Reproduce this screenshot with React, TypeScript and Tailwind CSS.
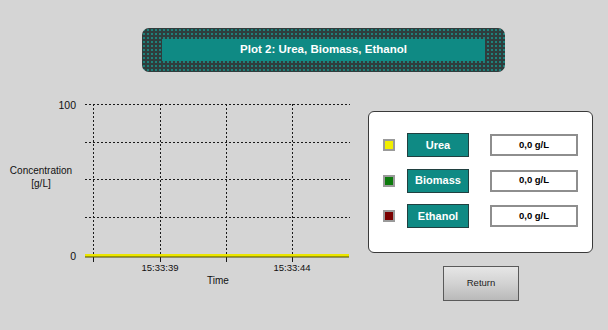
const rows = [
  { name: "Urea", swatch: "bg-[#f2ef00]" },
  { name: "Biomass", swatch: "bg-[#0c7a0c]" },
  { name: "Ethanol", swatch: "bg-[#7a0000]" },
];

const hLines = [14, 52, 89, 127];
const vLines = [93, 160, 226, 292];

function Chart() {
  return (
    <svg width={360} height={200} className="block shrink-0" fontFamily="'Liberation Sans', Arial, sans-serif">
      {hLines.map((y) => (
        <line key={y} x1={85} x2={350} y1={y + 0.5} y2={y + 0.5} stroke="#1a1a1a" strokeWidth={1} strokeDasharray="2 2" />
      ))}
      {vLines.map((x) => (
        <g key={x}>
          <line x1={x + 0.5} x2={x + 0.5} y1={14} y2={165} stroke="#1a1a1a" strokeWidth={1} strokeDasharray="2 2" />
          <line x1={x + 0.5} x2={x + 0.5} y1={165} y2={172} stroke="#1a1a1a" strokeWidth={1} />
        </g>
      ))}
      <rect x={85} y={164} width={264} height={3.5} fill="#4a4a00" />
      <rect x={85} y={164} width={264} height={2.5} fill="#ece600" />

      <text x={76} y={19} textAnchor="end" fontSize={10.5} fill="#111">100</text>
      <text x={76} y={170} textAnchor="end" fontSize={10.5} fill="#111">0</text>
      <text x={160} y={181} textAnchor="middle" fontSize={9.5} fill="#111">15:33:39</text>
      <text x={292} y={181} textAnchor="middle" fontSize={9.5} fill="#111">15:33:44</text>
      <text x={218} y={194} textAnchor="middle" fontSize={10} fill="#111">Time</text>
      <text x={41} y={84} textAnchor="middle" fontSize={10} fill="#111">Concentration</text>
      <text x={41} y={97} textAnchor="middle" fontSize={10} fill="#111">[g/L]</text>
    </svg>
  );
}

export default function App() {
  return (
    <div className="flex h-[330px] w-[608px] flex-col overflow-hidden bg-[#d5d5d5] font-['Liberation_Sans',Arial,sans-serif]">
      {/* title banner */}
      <div className="ml-[142px] mt-[28px] h-[44px] w-[363px] rounded-[7px] bg-[#2f3d3d] bg-[radial-gradient(circle,#1f807a_0.9px,transparent_1.3px)] bg-size-[4px_4px] px-[20px] py-[11px]">
        <div className="flex h-[22px] items-center justify-center bg-[#0f8a84] text-[11.5px] font-bold text-white">
          Plot 2: Urea, Biomass, Ethanol
        </div>
      </div>

      <div className="mt-[18px] flex">
        <Chart />

        <div className="ml-[8px] flex flex-col">
          <div className="mt-[21px] flex h-[142px] w-[225px] flex-col gap-[11.5px] rounded-[6px] border-[1.5px] border-[#3a3a3a] bg-white pl-[14px] pt-[21px]">
            {rows.map((r) => (
              <div key={r.name} className="flex h-[24px] items-center">
                <div className={`h-[12px] w-[12px] border-2 border-[#9a9a9a] ${r.swatch}`} />
                <div className="ml-[12px] flex h-[24px] w-[62px] items-center justify-center border border-[#204040] bg-[#0f8a84] text-[11px] font-bold text-white">
                  {r.name}
                </div>
                <div className="ml-[21px] flex h-[22px] w-[88px] items-center justify-center border-2 border-[#8e8e8e] bg-white text-[9.5px] font-bold text-black">
                  0,0 g/L
                </div>
              </div>
            ))}
          </div>

          <button
            type="button"
            className="ml-[75px] mt-[13px] flex h-[35px] w-[76px] items-center justify-center border border-[#5a5a5a] bg-gradient-to-b from-[#e6e6e6] via-[#d2d2d2] to-[#b9b9b9] text-[9.5px] text-[#222]"
          >
            Return
          </button>
        </div>
      </div>
    </div>
  );
}
